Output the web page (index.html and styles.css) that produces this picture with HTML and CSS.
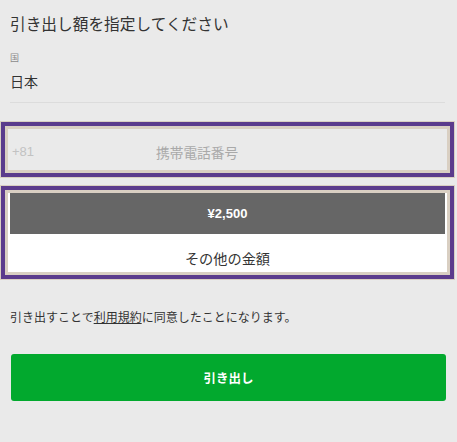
FILE: index.html
```html
<!DOCTYPE html>
<html lang="ja">
<head>
    <meta charset="UTF-8">
    <meta name="viewport" content="width=device-width, initial-scale=1.0">
    <title>引き出し</title>
    <link rel="stylesheet" href="styles.css">
</head>
<body>
    <div class="page">
        <h1 class="title">引き出し額を指定してください</h1>

        <div class="country">
            <div class="country-label">国</div>
            <div class="country-value">日本</div>
        </div>

        <div class="phone-box">
            <span class="phone-code">+81</span>
            <input type="tel" class="phone-input" placeholder="携帯電話番号">
        </div>

        <div class="amount-box">
            <button class="amount-btn">¥2,500</button>
            <div class="amount-other">その他の金額</div>
        </div>

        <p class="terms">引き出すことで<a href="#" class="terms-link">利用規約</a>に同意したことになります。</p>

        <button class="submit-btn">引き出し</button>
    </div>
</body>
</html>
```

FILE: styles.css
```css
body {
    margin: 0;
    background-color: #eaeaea;
    font-family: "Liberation Sans", "Noto Sans CJK JP", sans-serif;
    color: #333;
}
.page {
    padding: 10px 12px 0 10px;
}
.title {
    margin: 0;
    font-size: 15.7px;
    font-weight: normal;
    line-height: 30px;
    color: #333;
}
.country {
    border-bottom: 1px solid #dcdcdc;
    padding-bottom: 10px;
}
.country-label {
    margin-top: 11px;
    font-size: 9px;
    line-height: 14px;
    color: #8a8a8a;
}
.country-value {
    margin-top: 7px;
    font-size: 14px;
    line-height: 20px;
}
/* 選択中の枠 */
.phone-box,
.amount-box {
    margin-left: -5px;
    margin-right: -5px;
    border: 3px solid #d9cfc2;
    box-shadow: 0 0 0 4px #5b3b8c, 0 0 0 5px #d9cfc2;
}
.phone-box {
    margin-top: 23px;
    height: 41px;
    display: flex;
    align-items: center;
    padding-top: 4px;
    box-sizing: content-box;
    height: 37px;
}
.phone-code {
    padding-left: 4px;
    width: 144px;
    font-size: 13px;
    color: #c2c2c2;
}
.phone-input {
    flex: 1;
    border: none;
    background: transparent;
    font-family: "Noto Sans CJK JP", sans-serif;
    font-size: 13.7px;
    padding: 0;
    outline: none;
}
.phone-input::placeholder {
    color: #a9a9a9;
}
.amount-box {
    margin-top: 17px;
    background-color: #fff;
    padding: 0 2px 0 2px;
}
.amount-btn {
    display: block;
    width: 100%;
    height: 41px;
    border: none;
    background-color: #666;
    color: #fff;
    font-family: "Liberation Sans", sans-serif;
    font-size: 13px;
    font-weight: bold;
}
.amount-other {
    height: 38px;
    padding-top: 6px;
    box-sizing: border-box;
    line-height: 38px;
    text-align: center;
    font-size: 14.2px;
    color: #333;
}
.terms {
    margin: 34px 0 0 0;
    font-size: 12px;
    line-height: 18px;
    color: #333;
}
.terms-link {
    color: #333;
    text-decoration: underline;
}
.submit-btn {
    display: block;
    width: 100%;
    height: 47px;
    margin-top: 27px;
    margin-left: 1px;
    border: none;
    border-radius: 3px;
    background-color: #02a92e;
    color: #fff;
    font-family: "Noto Sans CJK JP", sans-serif;
    font-size: 12.5px;
    font-weight: bold;
}
```
